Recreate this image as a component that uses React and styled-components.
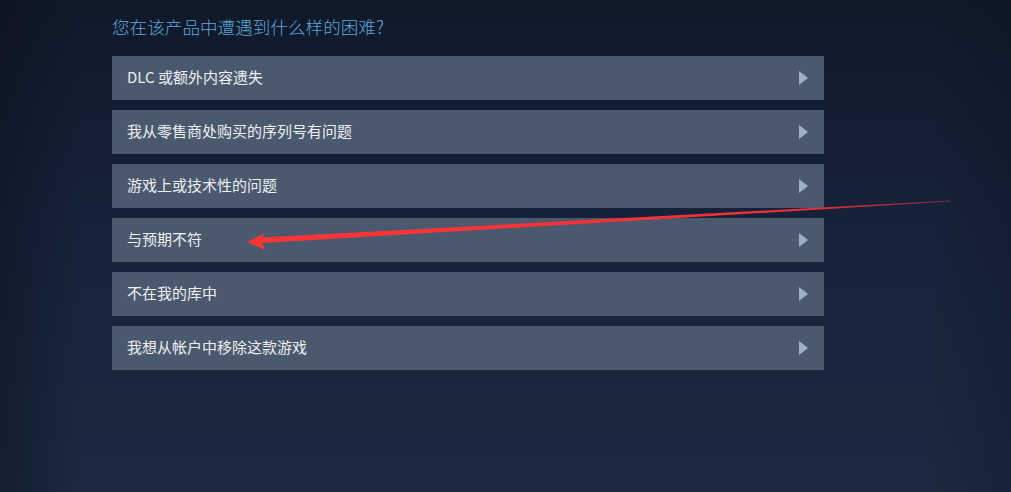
import React from "react";
import styled, { createGlobalStyle } from "styled-components";

const Global = createGlobalStyle`
  html, body { margin: 0; padding: 0; }
  body {
    background: #141e2d;
    font-family: "Noto Sans CJK SC", "Noto Sans", "Liberation Sans", sans-serif;
  }
`;

const Page = styled.div`
  position: relative;
  min-height: 492px;
  overflow: hidden;
  background:
    linear-gradient(90deg, rgba(10, 16, 26, 0.45) 0%, rgba(10, 16, 26, 0) 8%, rgba(10, 16, 26, 0) 92%, rgba(10, 16, 26, 0.25) 100%),
    linear-gradient(180deg, #101928 0%, #16223a 45%, #1b2a40 100%);
  padding: 15px 0 0 112px;
  box-sizing: border-box;
`;

const Heading = styled.h2`
  margin: 0 0 17px;
  font-size: 17.6px;
  line-height: 24px;
  font-weight: 300;
  color: #5ea6dc;
`;

const List = styled.div`
  display: flex;
  flex-direction: column;
  gap: 10px;
  width: 712px;
`;

const Row = styled.div`
  height: 44px;
  display: flex;
  align-items: center;
  justify-content: space-between;
  padding: 0 16px 0 15px;
  background: #4a596e;
  color: #eef0f3;
  font-size: 15px;
  line-height: 20px;
  cursor: pointer;
`;

const Label = styled.span`
  margin-top: -2px;
`;

const Arrow = styled.span`
  width: 0;
  height: 0;
  border-top: 7px solid transparent;
  border-bottom: 7px solid transparent;
  border-left: 9px solid #9cb0cc;
`;

const Overlay = styled.svg`
  position: absolute;
  left: 0;
  top: 0;
  pointer-events: none;
`;

const items = [
  "DLC 或额外内容遗失",
  "我从零售商处购买的序列号有问题",
  "游戏上或技术性的问题",
  "与预期不符",
  "不在我的库中",
  "我想从帐户中移除这款游戏",
];

export default function App() {
  return (
    <Page>
      <Global />
      <Heading>您在该产品中遭遇到什么样的困难?</Heading>
      <List>
        {items.map((t) => (
          <Row key={t}>
            <Label>{t}</Label>
            <Arrow />
          </Row>
        ))}
      </List>
      <Overlay width="1011" height="492" viewBox="0 0 1011 492">
        <defs>
          <linearGradient id="red" x1="248" y1="0" x2="950" y2="0" gradientUnits="userSpaceOnUse">
            <stop offset="0" stopColor="#ff3535" />
            <stop offset="0.8" stopColor="#f03038" />
            <stop offset="1" stopColor="#c0303a" stopOpacity="0.6" />
          </linearGradient>
        </defs>
        <polygon
          fill="url(#red)"
          points="247,242 265,233 262,237.6 950,200.6 950,201.6 262,243 265,250"
        />
      </Overlay>
    </Page>
  );
}
